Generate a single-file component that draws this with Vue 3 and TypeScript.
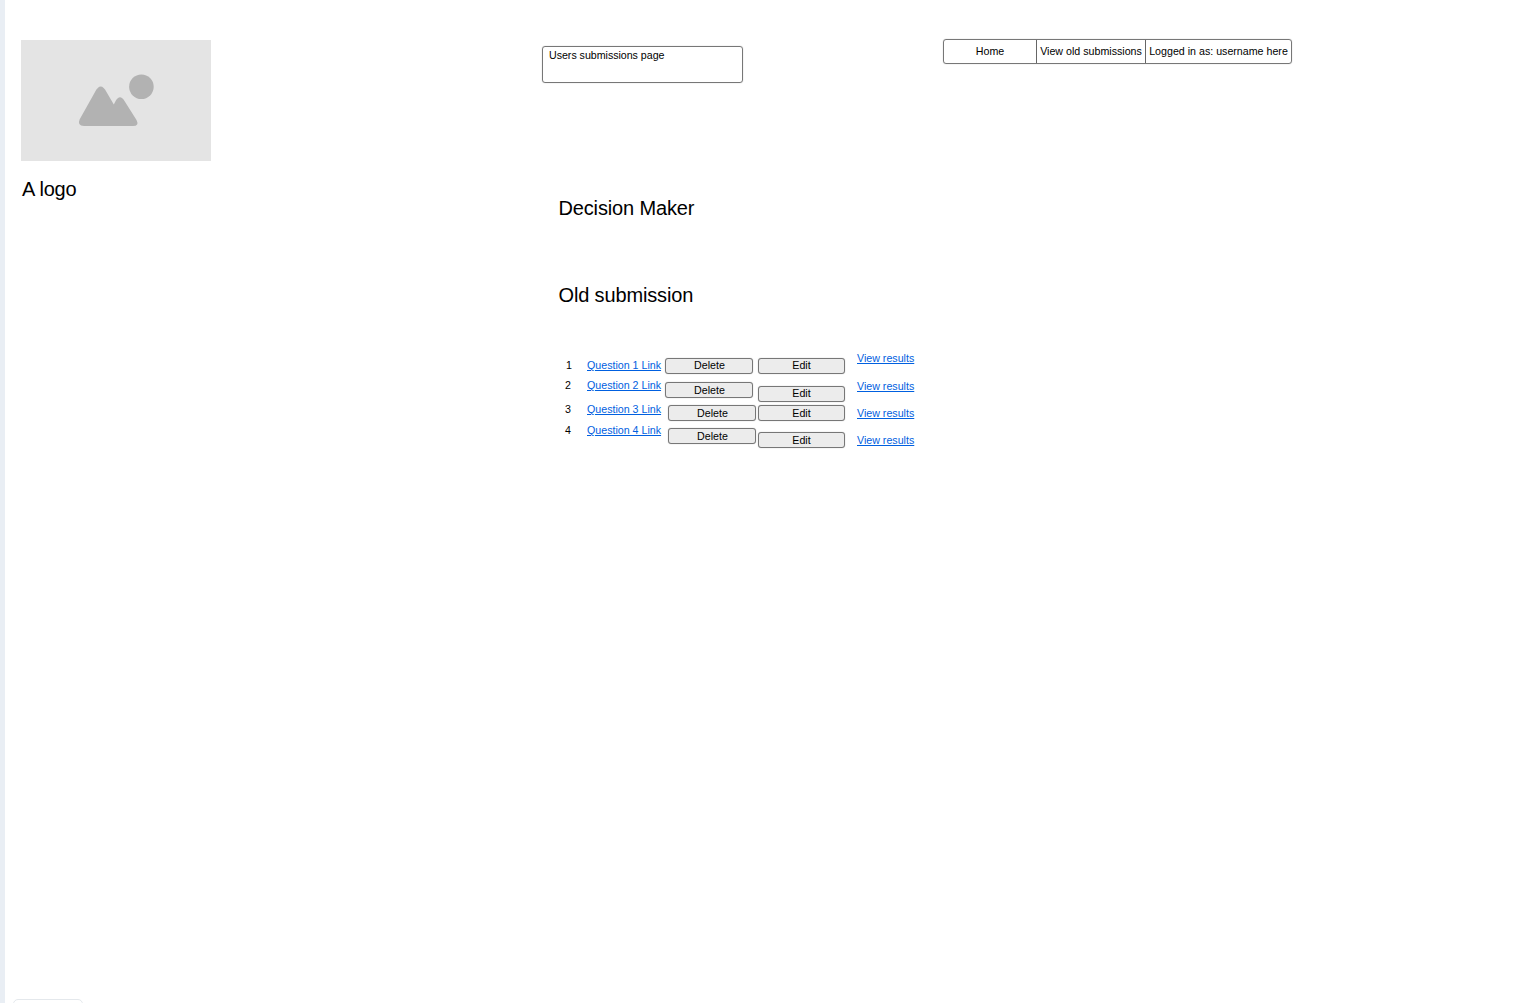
<script setup lang="ts">
interface Cell { label: string; top: number; left?: number; lift?: number }

const numbers: Cell[] = [
  { label: '1', top: 359, left: 8 },
  { label: '2', top: 379, left: 7 },
  { label: '3', top: 403, left: 7 },
  { label: '4', top: 424, left: 7 },
]
const questions: Cell[] = [
  { label: 'Question 1 Link', top: 359 },
  { label: 'Question 2 Link', top: 379 },
  { label: 'Question 3 Link', top: 403 },
  { label: 'Question 4 Link', top: 424 },
]
const deletes: Cell[] = [
  { label: 'Delete', top: 358, left: 0, lift: 2 },
  { label: 'Delete', top: 382, left: 0, lift: 0 },
  { label: 'Delete', top: 405, left: 3, lift: 0 },
  { label: 'Delete', top: 428, left: 3, lift: 0 },
]
const edits: Cell[] = [
  { label: 'Edit', top: 358, lift: 2 },
  { label: 'Edit', top: 386, lift: 2 },
  { label: 'Edit', top: 405, lift: 0 },
  { label: 'Edit', top: 432, lift: 0 },
]
const results: Cell[] = [
  { label: 'View results', top: 352 },
  { label: 'View results', top: 380 },
  { label: 'View results', top: 407 },
  { label: 'View results', top: 434 },
]

// Each column is a vertical stack: turn absolute tops into gaps from the previous cell.
function gap(list: Cell[], i: number, height: number, origin = 352): number {
  return i === 0 ? list[0].top - origin : list[i].top - list[i - 1].top - height
}
</script>

<template>
  <div class="page">
    <aside class="side">
      <div class="logo">
        <svg width="190" height="121" viewBox="0 0 190 121">
          <circle cx="120.4" cy="46.8" r="12.3" fill="#b2b2b2" />
          <path
            d="M58.6 79.5 L74 52 Q79.7 41 85.5 52 L92.8 64.5 L94.6 61 Q99 53.5 103.5 61 L115.5 80 Q118.5 86 112 86 L63 86 Q56 86 58.6 79.5 Z"
            fill="#b2b2b2"
          />
        </svg>
      </div>
      <div class="logo-label">A logo</div>
    </aside>

    <main class="center">
      <div class="title-box">Users submissions page</div>
      <h1 class="heading first">Decision Maker</h1>
      <h2 class="heading second">Old submission</h2>

      <div class="table">
        <div class="col col-num">
          <span
            v-for="(c, i) in numbers"
            :key="c.label"
            class="cell"
            :style="{ marginTop: gap(numbers, i, 13) + 'px', marginLeft: c.left + 'px' }"
          >{{ c.label }}</span>
        </div>
        <div class="col col-link">
          <a
            v-for="(c, i) in questions"
            :key="c.label"
            href="#"
            class="cell link"
            :style="{ marginTop: gap(questions, i, 13) + 'px' }"
          >{{ c.label }}</a>
        </div>
        <div class="col col-del">
          <button
            v-for="(c, i) in deletes"
            :key="c.top"
            class="btn btn-del"
            :style="{ marginTop: gap(deletes, i, 16) + 'px', marginLeft: c.left + 'px', paddingBottom: c.lift + 'px' }"
          >{{ c.label }}</button>
        </div>
        <div class="col col-edit">
          <button
            v-for="(c, i) in edits"
            :key="c.top"
            class="btn btn-edit"
            :style="{ marginTop: gap(edits, i, 16) + 'px', paddingBottom: c.lift + 'px' }"
          >{{ c.label }}</button>
        </div>
        <div class="col col-res">
          <a
            v-for="(c, i) in results"
            :key="c.top"
            href="#"
            class="cell link"
            :style="{ marginTop: gap(results, i, 13) + 'px' }"
          >{{ c.label }}</a>
        </div>
      </div>
    </main>

    <nav class="nav">
      <span class="nav-item home">Home</span>
      <span class="nav-item old">View old submissions</span>
      <span class="nav-item user">Logged in as: username here</span>
    </nav>

    <div class="stub"></div>
  </div>
</template>

<style>
html, body { margin: 0; background: #fff; }
</style>

<style scoped>
.page {
  position: relative;
  display: flex;
  align-items: flex-start;
  width: 1516px;
  height: 1003px;
  overflow: hidden;
  box-sizing: border-box;
  border-left: 5px solid #e9eef4;
  background: #fff;
  color: #000;
  font-family: "Liberation Sans", Arial, sans-serif;
  font-size: 10.67px;
}
.side {
  width: 537px;
  flex: none;
  box-sizing: border-box;
  padding: 40px 0 0 16px;
}
.logo {
  width: 190px;
  height: 121px;
  background: #e4e4e4;
}
.logo svg { display: block; }
.logo-label {
  margin: 17px 0 0 1px;
  font-size: 20px;
  line-height: 23px;
  letter-spacing: -0.2px;
}
.center {
  width: 401px;
  flex: none;
  padding-top: 46px;
}
.title-box {
  width: 201px;
  height: 37px;
  box-sizing: border-box;
  padding: 2px 6px;
  border: 1px solid #777;
  border-radius: 3px;
  box-shadow: 0 0 1px rgba(0, 0, 0, 0.35);
  line-height: 13px;
  letter-spacing: -0.03px;
}
.heading {
  margin: 0 0 0 16.5px;
  font-size: 20px;
  font-weight: 400;
  line-height: 23px;
  letter-spacing: -0.15px;
}
.first { margin-top: 114px; }
.second { margin-top: 64px; }
.table {
  display: flex;
  margin: 45px 0 0 16px;
}
.col {
  display: flex;
  flex-direction: column;
  align-items: flex-start;
  flex: none;
}
.col-num { width: 29px; }
.col-link { width: 78px; }
.col-del { width: 93px; }
.col-edit { width: 99px; }
.cell {
  display: block;
  line-height: 13px;
  height: 13px;
}
.link {
  color: #0060e0;
  text-decoration: underline;
  white-space: nowrap;
}
.btn {
  display: block;
  height: 16px;
  padding: 0;
  box-sizing: border-box;
  background: #ececec;
  border: 1px solid #777;
  border-radius: 3px;
  box-shadow: 0 0 1px rgba(0, 0, 0, 0.35);
  color: #000;
  font: 10.67px/13px "Liberation Sans", Arial, sans-serif;
}
.btn-del { width: 88px; padding-left: 1px; }
.btn-edit { width: 87px; }
.nav {
  display: flex;
  flex: none;
  margin-top: 39px;
  height: 25px;
  box-sizing: border-box;
  border: 1px solid #777;
  border-radius: 3px;
  box-shadow: 0 0 1px rgba(0, 0, 0, 0.35);
}
.nav-item {
  display: flex;
  align-items: center;
  justify-content: center;
  box-sizing: border-box;
  padding-bottom: 1px;
  white-space: nowrap;
}
.home { width: 92px; }
.old { width: 109px; border-left: 1px solid #666; }
.user { width: 146px; border-left: 1px solid #666; }
.stub {
  position: absolute;
  left: 8px;
  top: 999px;
  width: 70px;
  height: 20px;
  box-sizing: border-box;
  border: 1px solid #e4e8ec;
  border-radius: 5px;
}
</style>
